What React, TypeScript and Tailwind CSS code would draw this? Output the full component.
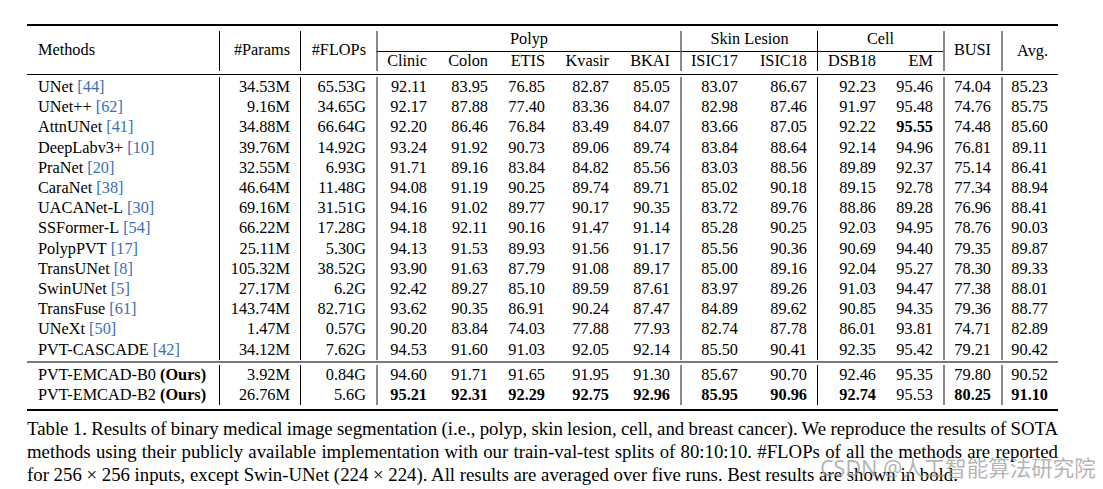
const serif = { fontFamily: '"Liberation Serif", "Times New Roman", serif' };

type Col = { w: string; line: string };

const cols: Col[] = [
  { w: "Methods", line: "" },
  { w: "#Params", line: "border-l border-black" },
  { w: "#FLOPs", line: "border-l border-black" },
  { w: "Clinic", line: "border-l-2 border-[#8a8a8a]" },
  { w: "Colon", line: "" },
  { w: "ETIS", line: "" },
  { w: "Kvasir", line: "" },
  { w: "BKAI", line: "" },
  { w: "ISIC17", line: "border-l-2 border-[#8a8a8a]" },
  { w: "ISIC18", line: "" },
  { w: "DSB18", line: "border-l border-black" },
  { w: "EM", line: "" },
  { w: "BUSI", line: "border-l-2 border-[#8a8a8a]" },
  { w: "Avg.", line: "border-l-2 border-[#8a8a8a]" },
];

const grid =
  "grid grid-cols-[192px_81px_76px_61px_61px_57px_64px_61px_68px_69px_69px_57px_58px_57px]";

const rows: [string, string, ...string[]][] = [
  ["UNet", "44", "34.53M", "65.53G", "92.11", "83.95", "76.85", "82.87", "85.05", "83.07", "86.67", "92.23", "95.46", "74.04", "85.23"],
  ["UNet++", "62", "9.16M", "34.65G", "92.17", "87.88", "77.40", "83.36", "84.07", "82.98", "87.46", "91.97", "95.48", "74.76", "85.75"],
  ["AttnUNet", "41", "34.88M", "66.64G", "92.20", "86.46", "76.84", "83.49", "84.07", "83.66", "87.05", "92.22", "*95.55", "74.48", "85.60"],
  ["DeepLabv3+", "10", "39.76M", "14.92G", "93.24", "91.92", "90.73", "89.06", "89.74", "83.84", "88.64", "92.14", "94.96", "76.81", "89.11"],
  ["PraNet", "20", "32.55M", "6.93G", "91.71", "89.16", "83.84", "84.82", "85.56", "83.03", "88.56", "89.89", "92.37", "75.14", "86.41"],
  ["CaraNet", "38", "46.64M", "11.48G", "94.08", "91.19", "90.25", "89.74", "89.71", "85.02", "90.18", "89.15", "92.78", "77.34", "88.94"],
  ["UACANet-L", "30", "69.16M", "31.51G", "94.16", "91.02", "89.77", "90.17", "90.35", "83.72", "89.76", "88.86", "89.28", "76.96", "88.41"],
  ["SSFormer-L", "54", "66.22M", "17.28G", "94.18", "92.11", "90.16", "91.47", "91.14", "85.28", "90.25", "92.03", "94.95", "78.76", "90.03"],
  ["PolypPVT", "17", "25.11M", "5.30G", "94.13", "91.53", "89.93", "91.56", "91.17", "85.56", "90.36", "90.69", "94.40", "79.35", "89.87"],
  ["TransUNet", "8", "105.32M", "38.52G", "93.90", "91.63", "87.79", "91.08", "89.17", "85.00", "89.16", "92.04", "95.27", "78.30", "89.33"],
  ["SwinUNet", "5", "27.17M", "6.2G", "92.42", "89.27", "85.10", "89.59", "87.61", "83.97", "89.26", "91.03", "94.47", "77.38", "88.01"],
  ["TransFuse", "61", "143.74M", "82.71G", "93.62", "90.35", "86.91", "90.24", "87.47", "84.89", "89.62", "90.85", "94.35", "79.36", "88.77"],
  ["UNeXt", "50", "1.47M", "0.57G", "90.20", "83.84", "74.03", "77.88", "77.93", "82.74", "87.78", "86.01", "93.81", "74.71", "82.89"],
  ["PVT-CASCADE", "42", "34.12M", "7.62G", "94.53", "91.60", "91.03", "92.05", "92.14", "85.50", "90.41", "92.35", "95.42", "79.21", "90.42"],
];

const ours: string[][] = [
  ["PVT-EMCAD-B0", "3.92M", "0.84G", "94.60", "91.71", "91.65", "91.95", "91.30", "85.67", "90.70", "92.46", "95.35", "79.80", "90.52"],
  ["PVT-EMCAD-B2", "26.76M", "5.6G", "*95.21", "*92.31", "*92.29", "*92.75", "*92.96", "*85.95", "*90.96", "*92.74", "95.53", "*80.25", "*91.10"],
];

function Num({ v }: { v: string }) {
  // leading * marks the best result
  return v.startsWith("*") ? <b>{v.slice(1)}</b> : <>{v}</>;
}

function Values({ vals, h }: { vals: string[]; h: string }) {
  return (
    <>
      {vals.map((v, i) => (
        <div
          key={i}
          className={`${h} flex items-center justify-end pr-[10px] ${cols[i + 1].line}`}
        >
          <Num v={v} />
        </div>
      ))}
    </>
  );
}

function Header() {
  const sub = ["Clinic", "Colon", "ETIS", "Kvasir", "BKAI", "ISIC17", "ISIC18", "DSB18", "EM"];
  return (
    <div className={`${grid} grid-rows-[21px_19px] mt-[5px] leading-[20px]`}>
      <div className="col-start-1 row-start-1 row-span-2 flex items-center pl-[11px] pb-[3px]">
        Methods
      </div>
      <div className="col-start-2 row-start-1 row-span-2 flex items-center justify-end pr-[10px] pb-[3px] border-l border-black">
        #Params
      </div>
      <div className="col-start-3 row-start-1 row-span-2 flex items-center justify-end pr-[10px] pb-[3px] border-l border-black">
        #FLOPs
      </div>
      <div className="col-start-4 col-span-5 row-start-1 flex items-center justify-center pb-[4px] border-l-2 border-[#8a8a8a] border-b border-b-black">
        Polyp
      </div>
      <div className="col-start-9 col-span-2 row-start-1 flex items-center justify-center pb-[4px] border-l-2 border-[#8a8a8a] border-b border-b-black">
        Skin Lesion
      </div>
      <div className="col-start-11 col-span-2 row-start-1 flex items-center justify-center pb-[4px] border-l border-black border-b border-b-black">
        Cell
      </div>
      <div className="col-start-13 row-start-1 row-span-2 flex items-center justify-end pr-[10px] pb-[3px] border-l-2 border-[#8a8a8a]">
        BUSI
      </div>
      <div className="col-start-14 row-start-1 row-span-2 flex items-center justify-end pr-[10px] pb-[1px] border-l-2 border-[#8a8a8a]">
        Avg.
      </div>
      {sub.map((s, i) => (
        <div
          key={s}
          className={`row-start-2 flex items-center justify-end pr-[10px] pb-[2px] ${cols[i + 3].line}`}
        >
          {s}
        </div>
      ))}
    </div>
  );
}

export default function App() {
  return (
    <div
      className="relative w-[1103px] h-[489px] bg-white text-black text-[16.3px] overflow-hidden"
      style={serif}
    >
      <div className="ml-[27px] w-[1031px]">
        <div className="mt-[24px] h-[2px] bg-black" />
        <Header />
        <div className="mt-[3px] h-[1px] bg-black" />

        {/* baselines */}
        <div className={`${grid} mt-[2px] leading-[20px]`}>
          {rows.map(([name, ref, ...vals]) => (
            <div key={name} className="contents">
              <div className="h-[20.2px] flex items-center pl-[11px] whitespace-nowrap">
                {name}&nbsp;<span className="text-[#3a6fb7]">[{ref}]</span>
              </div>
              <Values vals={vals} h="h-[20.2px]" />
            </div>
          ))}
        </div>

        <div className="mt-[1.5px] h-[2px] bg-[#7a7a7a]" />

        {/* ours */}
        <div className={`${grid} mt-[2px] leading-[20px]`}>
          {ours.map(([name, ...vals]) => (
            <div key={name} className="contents">
              <div className="h-[20px] flex items-center pl-[11px] whitespace-nowrap">
                {name}&nbsp;<b>(Ours)</b>
              </div>
              <Values vals={vals} h="h-[20px]" />
            </div>
          ))}
        </div>

        <div className="mt-[4px] h-[2px] bg-black" />

        <div className="mt-[6px] text-[18.8px] leading-[23px]">
          <p className="text-justify [text-align-last:justify] whitespace-nowrap [word-spacing:-1.5px]">
            Table 1. Results of binary medical image segmentation (i.e., polyp, skin lesion, cell, and breast
            cancer). We reproduce the results of SOTA
          </p>
          <p className="text-justify [text-align-last:justify] whitespace-nowrap [word-spacing:-1.5px]">
            methods using their publicly available implementation with our train-val-test splits of 80:10:10.
            #FLOPs of all the methods are reported
          </p>
          <p className="whitespace-nowrap">
            for 256 × 256 inputs, except Swin-UNet (224 × 224). All results are averaged over five runs. Best
            results are shown in bold.
          </p>
        </div>
      </div>

      <div
        className="absolute left-[820px] top-[454px] text-[21.5px] leading-[28px] text-[#9c9c9c]/75 whitespace-nowrap"
        style={{ fontFamily: '"Noto Sans", "Noto Sans CJK SC", sans-serif' }}
      >
        CSDN @人工智能算法研究院
      </div>
    </div>
  );
}
